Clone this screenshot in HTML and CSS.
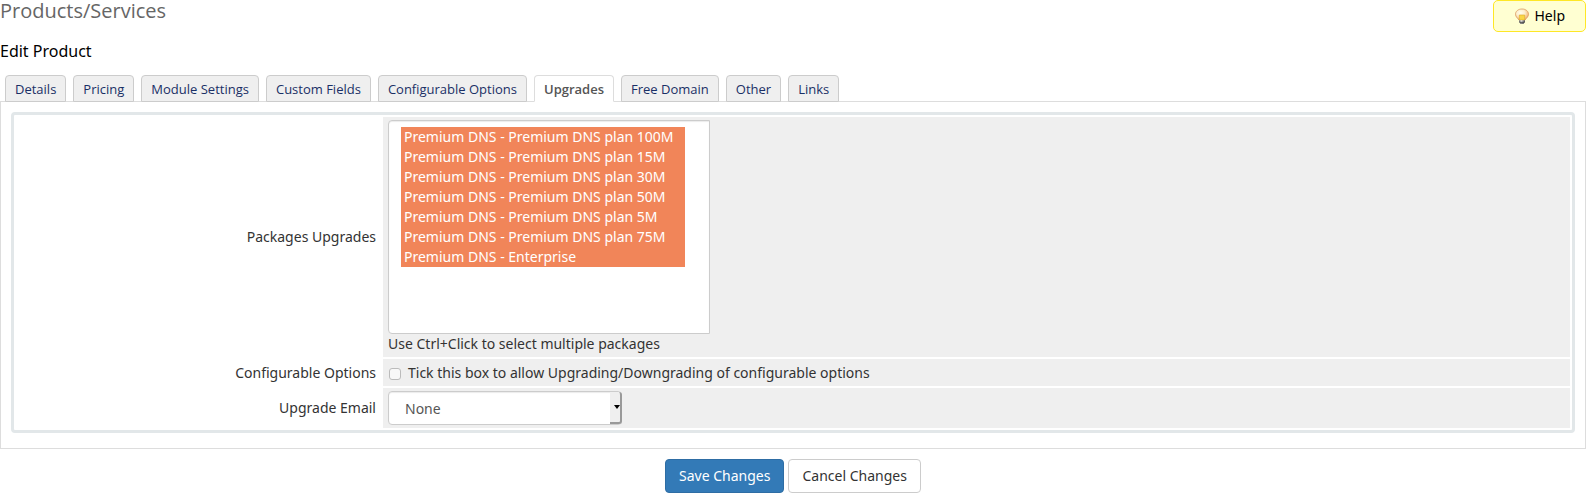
FILE: index.html
```html
<!DOCTYPE html>
<html lang="en">
<head>
<meta charset="utf-8">
<title>Products/Services</title>
<link rel="stylesheet" href="styles.css">
</head>
<body>
<header class="page-header">
  <h1 class="page-title">Products/Services</h1>
  <a class="help" href="#help">
    <svg class="help-icon" width="16" height="16" viewBox="0 0 16 16" aria-hidden="true">
      <defs>
        <radialGradient id="glass" cx="40%" cy="35%" r="65%">
          <stop offset="0" stop-color="#fffdf0"/>
          <stop offset="0.5" stop-color="#fdeecb"/>
          <stop offset="1" stop-color="#f3b070"/>
        </radialGradient>
        <linearGradient id="base" x1="0" x2="1" y1="0" y2="0">
          <stop offset="0" stop-color="#6d6d6d"/>
          <stop offset="0.4" stop-color="#e6e6e6"/>
          <stop offset="1" stop-color="#4c4c4c"/>
        </linearGradient>
      </defs>
      <path d="M8 1C4 1 1.500 3.400 1.500 6.200c0 2.700 2.200 3.800 3.500 5.900h6c1.300-2.100 3.500-3.200 3.500-5.900C14.500 3.400 12 1 8 1z" fill="url(#glass)" stroke="#d99a62" stroke-width=".8"/>
      <path d="M5.300 7h5.400v5H5.300z" fill="#f8d648" stroke="#dba829" stroke-width=".6"/>
      <path d="M5 12.200h6v1.800l-1.500 1.700h-3L5 14z" fill="url(#base)"/>
      <path d="M5 13.800h6l-1.500 1.900h-3z" fill="#444" opacity=".8"/>
    </svg>
    <span>Help</span>
  </a>
</header>
<h2 class="section-title">Edit Product</h2>
<nav class="tabs">
  <a class="tab" href="#details">Details</a>
  <a class="tab" href="#pricing">Pricing</a>
  <a class="tab" href="#module">Module Settings</a>
  <a class="tab" href="#fields">Custom Fields</a>
  <a class="tab" href="#options">Configurable Options</a>
  <a class="tab tab-active" href="#upgrades" aria-current="page">Upgrades</a>
  <a class="tab" href="#domain">Free Domain</a>
  <a class="tab" href="#other">Other</a>
  <a class="tab" href="#links">Links</a>
</nav>
<form>
  <div class="panel">
    <table class="form-table">
      <tr>
        <td class="label"><label for="packages">Packages Upgrades</label></td>
        <td class="field">
          <select class="package-list" id="packages" multiple size="10">
            <option selected>Premium DNS - Premium DNS plan 100M</option>
            <option selected>Premium DNS - Premium DNS plan 15M</option>
            <option selected>Premium DNS - Premium DNS plan 30M</option>
            <option selected>Premium DNS - Premium DNS plan 50M</option>
            <option selected>Premium DNS - Premium DNS plan 5M</option>
            <option selected>Premium DNS - Premium DNS plan 75M</option>
            <option selected>Premium DNS - Enterprise</option>
          </select>
          <div class="hint">Use Ctrl+Click to select multiple packages</div>
        </td>
      </tr>
      <tr>
        <td class="label"><label for="allow">Configurable Options</label></td>
        <td class="field">
          <label class="check-label"><input class="check" id="allow" type="checkbox"><span>Tick this box to allow Upgrading/Downgrading of configurable options</span></label>
        </td>
      </tr>
      <tr>
        <td class="label"><label for="email">Upgrade Email</label></td>
        <td class="field">
          <div class="dropdown">
            <select class="email-select" id="email"><option>None</option></select>
            <span class="arrow"><svg width="6" height="4" viewBox="0 0 6 4" aria-hidden="true"><path d="M0 0h6L3 4z"/></svg></span>
          </div>
        </td>
      </tr>
    </table>
  </div>
  <div class="actions">
    <button class="btn btn-primary" type="submit">Save Changes</button>
    <button class="btn" type="reset">Cancel Changes</button>
  </div>
</form>
</body>
</html>
```
FILE: styles.css
```css
* {
  box-sizing: border-box;
}

body {
  margin: 0;
  background: #fff;
  color: #333;
  font: 14px/20px "Noto Sans", "Open Sans", sans-serif;
}

.page-header {
  display: flex;
  justify-content: space-between;
  align-items: flex-start;
}

.page-title {
  margin: 0;
  color: #666;
  font-family: "Open Sans", sans-serif;
  font-size: 20px;
  font-weight: 400;
  line-height: 22px;
}

.help {
  display: flex;
  align-items: center;
  gap: 5px;
  height: 32px;
  padding: 0 20px;
  border: 1px solid #fee726;
  border-radius: 5px;
  background: #ffffd2;
  color: #000;
  text-decoration: none;
}

.section-title {
  margin: 8px 0 13px;
  color: #000;
  font-size: 16px;
  font-weight: 400;
  line-height: 22px;
}

.tabs {
  display: flex;
  gap: 7px;
  padding-left: 5px;
}

.tab {
  height: 27px;
  padding: 0 9px;
  border: 1px solid #ccc;
  border-radius: 4px 4px 0 0;
  background: #efefef;
  color: #1a2f66;
  font-family: "Open Sans", sans-serif;
  font-size: 13px;
  line-height: 27px;
  text-decoration: none;
}

.tab-active {
  position: relative;
  border-color: #ddd;
  border-bottom-color: #fff;
  background: #fff;
  color: #555;
  font-weight: 600;
}

.panel {
  margin-top: -1px;
  padding: 10px;
  padding-bottom: 15px;
  border: 1px solid #ddd;
}

.form-table {
  width: 100%;
  border: 3px solid #e2e7e9;
  border-radius: 4px;
  border-collapse: separate;
  border-spacing: 2px;
}

.label {
  width: 365px;
  padding: 3px 5px;
  text-align: right;
}

.field {
  padding: 3px 5px;
  background: #efefef;
}

.package-list {
  display: block;
  width: 322px;
  height: 214px;
  padding: 6px 24px 6px 12px;
  overflow: hidden;
  border: 1px solid #ccc;
  border-radius: 4px 0 0 4px;
  outline: 0;
  background: #fff;
  box-shadow: inset 0 1px 1px #ececec;
  color: #fff;
  font: inherit;
}

.package-list option {
  height: 20px;
  min-height: 20px;
  padding: 0 3px;
  line-height: 20px;
}

.package-list option:checked {
  background: #f18559 linear-gradient(#f18559, #f18559);
  color: #fff;
  -webkit-text-fill-color: #fff;
}

.check-label {
  display: flex;
  align-items: center;
  gap: 7px;
  height: 21px;
}

.check {
  appearance: none;
  width: 12px;
  height: 12px;
  margin: 2px 0 0 1px;
  border: 1px solid #bbb;
  border-radius: 3px;
  background: #f8f8f8;
}

.dropdown {
  position: relative;
  width: 234px;
}

.email-select {
  display: block;
  appearance: none;
  width: 100%;
  height: 34px;
  padding: 1px 16px 0;
  border: 1px solid #ccc;
  border-radius: 4px;
  background: #fff;
  box-shadow: inset 0 1px 1px #ececec;
  color: #555;
  font: inherit;
}

.arrow {
  position: absolute;
  top: 1px;
  right: 0;
  bottom: 1px;
  display: flex;
  align-items: center;
  justify-content: flex-end;
  width: 12px;
  border-right: 2px solid #999;
  border-bottom: 2px solid #999;
  border-radius: 0 3px 3px 0;
  background: #efefef;
  pointer-events: none;
}

.actions {
  display: flex;
  justify-content: center;
  gap: 4px;
  padding: 10px 0;
}

.btn {
  height: 34px;
  padding: 0 13px;
  border: 1px solid #ccc;
  border-radius: 4px;
  background: #fff;
  color: #333;
  font: inherit;
}

.btn-primary {
  border-color: #2e6da4;
  background: #337ab7;
  color: #fff;
}
```
